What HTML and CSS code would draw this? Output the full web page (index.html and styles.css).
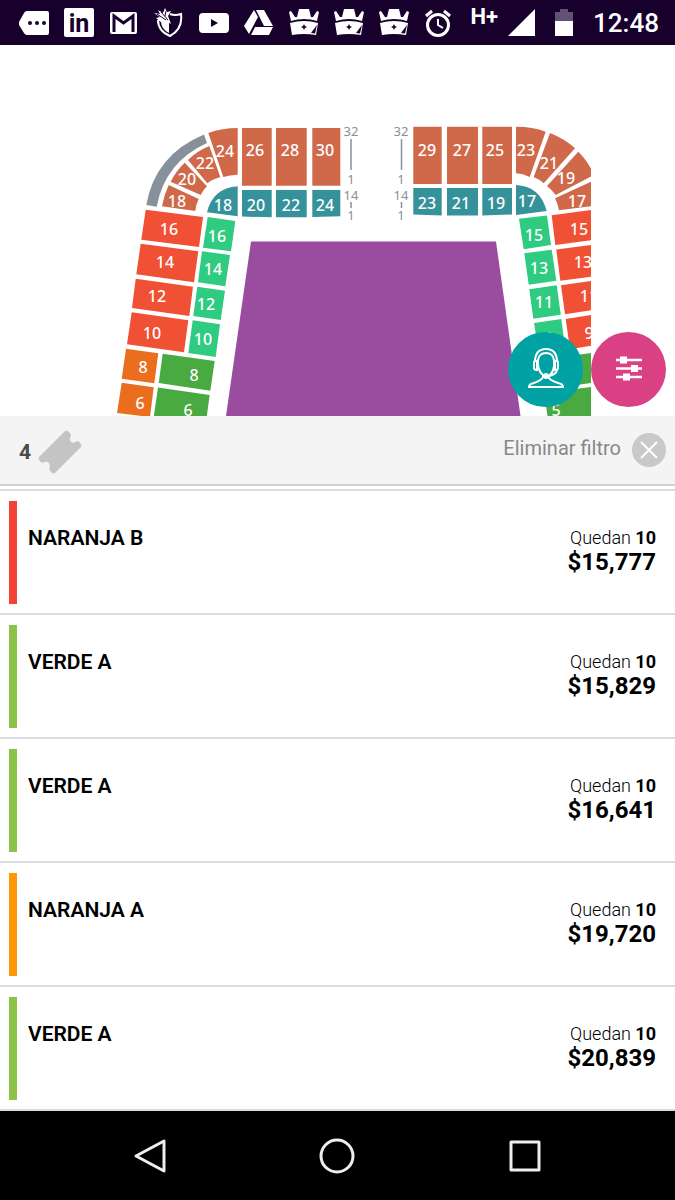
FILE: index.html
```html
<!DOCTYPE html>
<html lang="es">
<head>
    <meta charset="UTF-8">
    <meta name="viewport" content="width=device-width, initial-scale=1.0">
    <title>Boletos</title>
    <link rel="stylesheet" href="styles.css">
</head>
<body>

    <!-- Shared icons -->
    <svg class="defs" aria-hidden="true">
        <symbol id="crown" viewBox="0 0 30 30">
            <path fill="#fff" d="M0 4 L2 3 L6 9 H8 L10 1 H20 L22 9 H24 L28 3 L30 4 L28 13 Q15 9 2 13 Z"/>
            <path fill="#fff" d="M1 15 Q15 11 29 15 L27 27 Q15 25 3 27 Z"/>
            <path fill="#17002c" d="M15 16 L16 18 L18 19 L16 20 L15 22 L14 20 L12 19 L14 18 Z M28 17 L22 25 L26 25.500 Z"/>
        </symbol>
    </svg>

    <!-- Status bar -->
    <header class="status-bar">
        <div class="status-icons">
            <svg viewBox="0 0 30 30"><path fill="#fff" d="M8 3 H28 Q30 3 30 5 V25 Q30 27 28 27 H8 Q6 27 5 25 L0 17 Q-1 15 0 14 L5 5 Q6 3 8 3 Z"/><g fill="#17002c"><circle cx="11" cy="15" r="2"/><circle cx="18" cy="15" r="2"/><circle cx="25" cy="15" r="2"/></g></svg>
            <svg viewBox="0 0 30 30"><rect width="30" height="29" rx="2" fill="#fff"/><text class="linkedin" x="15" y="24">in</text></svg>
            <svg viewBox="0 0 30 30"><rect x="1" y="4" width="27" height="22" rx="2" fill="#fff"/><path fill="none" stroke="#17002c" stroke-width="3" d="M5 24 V8 L14.500 15 L24 8 V24"/></svg>
            <svg viewBox="0 0 30 30"><path fill="none" stroke="#fff" stroke-width="2" d="M16 6 Q21 8 27 6 Q29 21 16 28 Q4 23 4 12"/><path fill="#fff" d="M15 13 V25 Q7 21 7 13 Z"/><path fill="#fff" d="M0 5 L6 6 L4 2 L9 5 L11 0 L13 4 L17 3 L14 8 L17 16 L12 13 L8 15 L2 10 L6 9 Z"/><path fill="none" stroke="#17002c" d="M3 6 L12 12 M7 4 L14 12 M12 3 L11 8"/></svg>
            <svg viewBox="0 0 30 30"><rect y="5" width="30" height="20" rx="4" fill="#fff"/><path fill="#17002c" d="M12 11 L19 15 L12 19 Z"/></svg>
            <svg viewBox="0 0 30 30"><path fill="#fff" d="M10 2 L14 9 L5 26 L0 18 Z M12 2 H20 L29 18 H20 Z M11 19 H29 L25 27 H7 Z"/></svg>
            <svg><use href="#crown"/></svg>
            <svg><use href="#crown"/></svg>
            <svg><use href="#crown"/></svg>
            <svg viewBox="0 0 30 30"><g fill="none" stroke="#fff" stroke-width="3"><circle cx="14" cy="17" r="10.500"/><path stroke-width="2" d="M14 11 V17 L19 20"/><path d="M2 8 L8 3 M20 3 L26 8"/></g></svg>
        </div>
        <div class="status-info">
            <div class="network">
                <span>H+</span>
                <svg viewBox="0 0 27 27" width="27" height="27"><path fill="#fff" d="M27 0 V27 H0 Z"/></svg>
            </div>
            <svg viewBox="0 0 18 27" width="18" height="27"><path fill="#625175" d="M5 0 H13 V3 H18 V12 H0 V3 H5 Z"/><path fill="#fff" d="M0 12 H18 V27 H0 Z"/></svg>
            <time class="clock">12:48</time>
        </div>
    </header>

    <main>
        <!-- Stadium map -->
        <section class="map">
            <svg class="map-drawing" viewBox="0 45 675 371" role="img" aria-label="Mapa de secciones">
                <clipPath id="mapArea"><rect x="0" y="45" width="591" height="371"/></clipPath>
                <g clip-path="url(#mapArea)">
                    <path fill="#9a4d9e" d="M251 241.500 H496 L520.500 416 H226 Z"/>

                    <path fill="#87919c" d="M204 134.500 Q155 155 146.300 205 L156.700 206.700 Q165 162 207 143 Z"/>

                    <g fill="#cf694a">
                        <path d="M208.300 133 Q222 128 237.700 128 V174.700 Q230 175 223.300 177 Z"/>
                        <path d="M209.300 146 Q197 151 188 160 L207.300 183.300 Q213 179 220.300 177 Z"/>
                        <path d="M184.700 162.700 Q176 171 170.700 181.700 L200.700 195 Q203 190 207 186.300 Z"/>
                        <path d="M168.700 185 Q164 195 162 206.300 L195.300 211 Q196 204 198.700 199 Z"/>
                        <path d="M242 128 H271.700 V185.700 H242 Z M276 128 H306.700 V185.700 H276 Z M312.300 128 H340.300 V185.700 H312.300 Z"/>
                        <path d="M413.300 126.700 H441.700 V184 H413.300 Z M447 126.700 H478 V184 H447 Z M482.300 126.700 H512 V184 H482.300 Z"/>
                        <path d="M516 126.700 Q533 126.700 545.700 131.700 L529.700 177 Q523 173.500 516 173.300 Z"/>
                        <path d="M550 133 Q565 139 575 148.300 L543.700 183.300 Q539 179 533.700 177 Z"/>
                        <path d="M578.300 151.700 Q588 161 594 175 L555.700 195 Q552 190 547 186 Z"/>
                        <path d="M555 198.300 L595 180 L601 205 L559 210.300 Q558 204 555 198.300 Z"/>
                    </g>

                    <g fill="#36929a">
                        <path d="M237.700 186.300 V216.300 L207 212.300 Q213 188 237.700 186.300 Z"/>
                        <path d="M242 190 H271.700 V217.300 L242 216.500 Z M276 190 H306.700 V217.300 H276 Z M312.300 190 H340.300 V216.300 L312.300 217 Z"/>
                        <path d="M413.300 188 H441.700 V215.500 L413.300 214.500 Z M447 188 H478 V215.500 H447 Z M482.300 188 H512 V214.500 L482.300 215.500 Z"/>
                        <path d="M516 185 Q540 186 546.700 211 L516 215 Z"/>
                    </g>

                    <g fill="#f05033">
                        <path d="M145.700 209.700 L203 217 L199 247 L141.300 239.700 Z"/>
                        <path d="M140.700 243.700 L198.300 251.300 L194 282.300 L136.300 274.300 Z"/>
                        <path d="M135.700 278.700 L193 286.700 L189.300 316 L132 308 Z"/>
                        <path d="M131.700 312.300 L188.300 320.300 L184 352.300 L127 344.300 Z"/>
                        <path d="M551.700 215.300 L591 210 V240.300 L555.300 245 Z"/>
                        <path d="M556.300 249.500 L591 245 V276.700 L560.300 280.700 Z"/>
                        <path d="M561 285.300 L591 281 V310.300 L565 314.300 Z"/>
                        <path d="M565.700 319 L591 315 V345.700 L570 349.300 Z"/>
                    </g>

                    <g fill="#2ecb80">
                        <path d="M207.700 217 L235.300 221 L231 251.300 L203 247.700 Z"/>
                        <path d="M202 251.300 L230 255 L225.300 286.300 L198 282.300 Z"/>
                        <path d="M197.300 286.700 L225 290.700 L220.700 320 L193.300 316 Z"/>
                        <path d="M192.700 320.300 L220 324.300 L215.700 357 L188.300 353 Z"/>
                        <path d="M519 218.700 L547 215.500 L551 245 L523.700 249.300 Z"/>
                        <path d="M524.300 253.300 L551.700 249.700 L556.300 280.700 L528.700 284.700 Z"/>
                        <path d="M529.300 289.300 L556.700 285.300 L560.700 314.700 L533.300 318.700 Z"/>
                        <path d="M534 323 L561.300 319 L565.300 349.300 L538.700 353 Z"/>
                    </g>

                    <g fill="#eb6e1f">
                        <path d="M126 348.700 L158.300 353.300 L154.300 383.300 L121.700 378.700 Z"/>
                        <path d="M121.700 382.700 L153.700 387.300 L150 417 L117 413 Z"/>
                    </g>

                    <g fill="#49aa42">
                        <path d="M162.700 353.700 L214.700 361 L210.300 390.700 L158.700 383 Z"/>
                        <path d="M158 387.500 L209.700 395 L206.700 417 H153.700 Z"/>
                        <path d="M540 360 L591 353 V383 L544 389.500 Z"/>
                        <path d="M544 393 L591 387 V417 H547.700 Z"/>
                    </g>

                    <g class="section-number">
                        <text x="225" y="157">24</text>
                        <text x="255" y="156">26</text>
                        <text x="290" y="156">28</text>
                        <text x="325" y="156">30</text>
                        <text x="205" y="169">22</text>
                        <text x="187" y="185">20</text>
                        <text x="177" y="207">18</text>
                        <text x="223" y="211">18</text>
                        <text x="256" y="211">20</text>
                        <text x="291" y="211">22</text>
                        <text x="325" y="211">24</text>
                        <text x="169" y="235">16</text>
                        <text x="165" y="268">14</text>
                        <text x="157" y="302">12</text>
                        <text x="152" y="339">10</text>
                        <text x="217" y="242">16</text>
                        <text x="213" y="275">14</text>
                        <text x="206" y="310">12</text>
                        <text x="203" y="345">10</text>
                        <text x="143" y="373">8</text>
                        <text x="140" y="409">6</text>
                        <text x="194" y="381">8</text>
                        <text x="188" y="416">6</text>

                        <text x="427" y="156">29</text>
                        <text x="462" y="156">27</text>
                        <text x="495" y="156">25</text>
                        <text x="526" y="156">23</text>
                        <text x="549" y="169">21</text>
                        <text x="566" y="184">19</text>
                        <text x="577" y="207">17</text>
                        <text x="427" y="209">23</text>
                        <text x="461" y="209">21</text>
                        <text x="496" y="209">19</text>
                        <text x="527" y="207">17</text>
                        <text x="579" y="235">15</text>
                        <text x="583" y="268">13</text>
                        <text x="589" y="302">11</text>
                        <text x="589" y="339">9</text>
                        <text x="534" y="241">15</text>
                        <text x="539" y="274">13</text>
                        <text x="544" y="308">11</text>
                        <text x="549" y="344">9</text>
                        <text x="556" y="416">5</text>
                    </g>

                    <!-- Row ranges -->
                    <g class="row-number">
                        <text x="351" y="136">32</text>
                        <text x="351" y="184">1</text>
                        <text x="351" y="200">14</text>
                        <text x="351" y="220">1</text>
                        <text x="401" y="136">32</text>
                        <text x="401" y="184">1</text>
                        <text x="401" y="200">14</text>
                        <text x="401" y="220">1</text>
                    </g>
                    <path stroke="#87919c" stroke-width="1.500" d="M351 139 V170 M351 202 V208 M401.500 139 V170 M401.500 202 V208"/>
                </g>
            </svg>

            <div class="map-actions">
                <button class="round-btn support" type="button" aria-label="Ayuda">
                    <svg viewBox="0 0 40 44" width="40" height="44" fill="none" stroke="#fff" stroke-width="2">
                        <path d="M9 14 Q9 1 20 1 Q31 1 31 14"/>
                        <path d="M12 17 V12 Q13 5 20 5 Q27 5 28 12 V18 Q27 25 23 28 V30 Q24 32 32 35 Q37 36 37 39 H3 Q3 36 8 35 Q16 32 17 29 V27 Q13 24 12 17"/>
                        <path d="M11 13 H9 Q8 13 8 15 V20 Q8 22 11 22 Z M29 13 H31 Q32 13 32 15 V20 Q32 22 29 22 Z M31 22 Q30 27 22 28"/>
                        <circle cx="20" cy="28" r="2" fill="#fff"/>
                    </svg>
                </button>
                <button class="round-btn filters" type="button" aria-label="Filtros">
                    <svg viewBox="0 0 26 26" width="26" height="26">
                        <path stroke="#fff" stroke-width="2.500" d="M0 3 H26 M0 11.500 H26 M0 20 H26"/>
                        <path fill="#fff" d="M4 -0.500 H11 V6.500 H4 Z M15 8 H22 V15 H15 Z M7 16.500 H14 V23.500 H7 Z"/>
                    </svg>
                </button>
            </div>
        </section>

        <!-- Active filter -->
        <div class="filter-bar">
            <div class="ticket-count">
                <span>4</span>
                <svg viewBox="0 0 44 44" width="44" height="44"><path fill="#c4c4c4" d="M27 1 Q29 0 31 2 L33 5 Q31 9 33 12 Q36 14 39 11 Q41 11 43 14 Q44 16 43 17 L17 43 Q15 44 13 42 L11 39 Q13 35 10 32 Q7 31 5 33 Q3 33 1 30 Q0 29 1 27 Z"/></svg>
            </div>
            <button class="clear-filter" type="button">
                <span>Eliminar filtro</span>
                <svg viewBox="0 0 34 34" width="34" height="34"><circle cx="17" cy="17" r="17" fill="#c9c9c9"/><path stroke="#fff" stroke-width="2" d="M9 9 L25 25 M25 9 L9 25"/></svg>
            </button>
        </div>

        <!-- Sections with tickets left -->
        <ul class="sections">
            <li class="section red">
                <h2>NARANJA B</h2>
                <div class="offer">
                    <p class="left">Quedan <b>10</b></p>
                    <p class="price">$15,777</p>
                </div>
            </li>
            <li class="section green">
                <h2>VERDE A</h2>
                <div class="offer">
                    <p class="left">Quedan <b>10</b></p>
                    <p class="price">$15,829</p>
                </div>
            </li>
            <li class="section green">
                <h2>VERDE A</h2>
                <div class="offer">
                    <p class="left">Quedan <b>10</b></p>
                    <p class="price">$16,641</p>
                </div>
            </li>
            <li class="section orange">
                <h2>NARANJA A</h2>
                <div class="offer">
                    <p class="left">Quedan <b>10</b></p>
                    <p class="price">$19,720</p>
                </div>
            </li>
            <li class="section green">
                <h2>VERDE A</h2>
                <div class="offer">
                    <p class="left">Quedan <b>10</b></p>
                    <p class="price">$20,839</p>
                </div>
            </li>
        </ul>
    </main>

    <!-- Navigation bar -->
    <nav class="nav-bar">
        <button type="button" aria-label="Atrás"><svg viewBox="0 0 36 36" width="36" height="36"><path d="M32 3 V33 L4 18 Z"/></svg></button>
        <button type="button" aria-label="Inicio"><svg viewBox="0 0 36 36" width="36" height="36"><circle cx="18" cy="18" r="16"/></svg></button>
        <button type="button" aria-label="Recientes"><svg viewBox="0 0 36 36" width="36" height="36"><rect x="4" y="4" width="28" height="28"/></svg></button>
    </nav>

</body>
</html>
```

FILE: styles.css
```css
/* General styles */
* {
    box-sizing: border-box;
    margin: 0;
    padding: 0;
}

body {
    display: flex;
    flex-direction: column;
    min-height: 100vh;
    font-family: Roboto, Arial, sans-serif;
    background: #fff;
    color: #000;
}

button {
    border: none;
    background: none;
    font-family: inherit;
    cursor: pointer;
}

svg {
    display: block;
}

.defs {
    position: absolute;
    width: 0;
    height: 0;
}

/* Status bar */
.status-bar {
    display: flex;
    justify-content: space-between;
    align-items: center;
    height: 45px;
    padding: 0 16px 0 19px;
    background: #17002c;
    color: #fff;
}

.status-icons {
    display: flex;
    gap: 15px;
}

.status-icons svg {
    width: 30px;
    height: 30px;
}

.linkedin {
    font-size: 25px;
    font-weight: bold;
    fill: #17002c;
    text-anchor: middle;
}

.status-info {
    display: flex;
    align-items: center;
    gap: 20px;
}

.network {
    display: flex;
    align-items: center;
    gap: 10px;
}

.network span {
    height: 32px;
    font-size: 22px;
    line-height: 20px;
    font-weight: bold;
}

.clock {
    font-size: 26px;
    font-weight: 500;
}

/* Stadium map */
.map {
    position: relative;
}

.map-drawing {
    width: 100%;
    height: auto;
}

.section-number {
    font-family: "Noto Sans", sans-serif;
    font-size: 16px;
    font-weight: 500;
    fill: #fff;
    text-anchor: middle;
}

.row-number {
    font-family: "Noto Sans", sans-serif;
    font-size: 13px;
    fill: #87919c;
    text-anchor: middle;
}

.map-actions {
    position: absolute;
    right: 9px;
    bottom: 9px;
    display: flex;
    gap: 8px;
}

.round-btn {
    display: flex;
    justify-content: center;
    align-items: center;
    width: 75px;
    height: 75px;
    border-radius: 50%;
}

.round-btn svg {
    overflow: visible;
}

.support {
    background: #00a2a3;
}

.filters {
    background: #da4184;
}

/* Filter bar */
.filter-bar {
    display: flex;
    justify-content: space-between;
    align-items: center;
    height: 70px;
    padding: 0 9px 0 19px;
    background: #f4f4f4;
    border-bottom: 2px solid #d2d2d2;
}

.ticket-count {
    display: flex;
    align-items: center;
    gap: 7px;
    padding-top: 4px;
    font-size: 21px;
    font-weight: bold;
    color: #4a4a4a;
}

.clear-filter {
    display: flex;
    align-items: center;
    gap: 11px;
    font-size: 20px;
    color: #888;
}

.clear-filter span {
    padding-bottom: 4px;
}

/* Section list */
.sections {
    margin-top: 3px;
    border-top: 2px solid #dcdddf;
    list-style: none;
}

.section {
    display: flex;
    height: 124px;
    padding: 10px 19px 9px 9px;
    border-bottom: 2px solid #dcdddf;
}

.section::before {
    content: "";
    width: 8px;
    margin-right: 11px;
    background: #8bc34a;
}

.section.red::before {
    background: #f44336;
}

.section.orange::before {
    background: #ff9800;
}

.section h2 {
    flex: 1;
    padding-top: 25px;
    font-size: 21px;
    line-height: 24px;
    font-weight: 600;
}

.offer {
    padding-top: 25px;
    text-align: right;
}

.left {
    font-size: 18px;
    line-height: 24px;
    font-weight: 300;
}

.left b {
    font-weight: bold;
}

.price {
    font-size: 24px;
    line-height: 24px;
    font-weight: bold;
}

/* Navigation bar */
.nav-bar {
    flex: 1;
    display: grid;
    grid-template-columns: repeat(3, 1fr);
    min-height: 72px;
    padding: 0 56px;
    background: #000;
}

.nav-bar button {
    display: flex;
    justify-content: center;
    align-items: center;
}

.nav-bar svg {
    fill: none;
    stroke: #eee;
    stroke-width: 3;
    stroke-linejoin: round;
}
```
